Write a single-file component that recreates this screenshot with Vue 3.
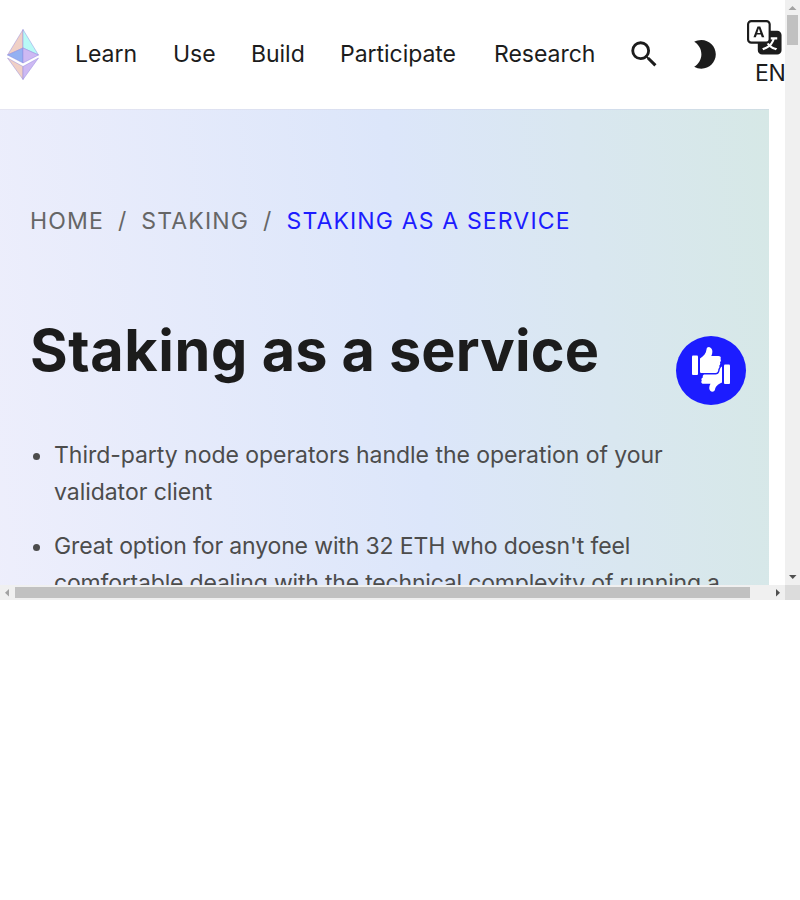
<script setup>
const links = ['Learn', 'Use', 'Build', 'Participate', 'Research']
const points = [
  ['Third-party node operators handle the operation of your', 'validator client'],
  [
    "Great option for anyone with 32 ETH who doesn't feel",
    'comfortable dealing with the technical complexity of running a',
  ],
]
</script>

<template>
  <div class="frame">
    <div class="page">
      <header class="nav">
        <svg class="logo" viewBox="0 0 32 51" width="32" height="51">
          <g stroke="#8c82dc" stroke-opacity=".55" stroke-width=".8" stroke-linejoin="round">
            <path d="M16 .5V19L.5 26z" fill="#f0d0c6" />
            <path d="M16 .5V19l15.500 7z" fill="#b8faf6" />
            <path d="M16 19v15L.5 26z" fill="#94b1f2" />
            <path d="M16 19v15l15.500-8z" fill="#cdb9f3" />
            <path d="M.5 29 16 37.500v13z" fill="#f0d0c6" />
            <path d="M31.500 29 16 37.500v13z" fill="#cdb9f3" />
          </g>
        </svg>
        <nav class="links">
          <a v-for="link in links" :key="link">{{ link }}</a>
        </nav>
        <svg class="icon search" viewBox="0 0 24 24">
          <path d="M15.500 14h-.79l-.28-.27A6.471 6.471 0 0 0 16 9.500 6.500 6.500 0 1 0 9.500 16c1.610 0 3.090-.59 4.230-1.570l.27.28v.79l5 4.990L20.490 19l-4.990-5zm-6 0C7.010 14 5 11.990 5 9.500S7.010 5 9.500 5 14 7.010 14 9.500 11.990 14 9.500 14z" />
        </svg>
        <svg class="icon moon" viewBox="0 0 24 24">
          <path d="M10 2c-1.820 0-3.530.5-5 1.350C7.990 5.080 10 8.300 10 12s-2.010 6.920-5 8.650C6.470 21.500 8.180 22 10 22c5.520 0 10-4.480 10-10S15.520 2 10 2z" />
        </svg>
        <div class="language">
          <svg class="icon" viewBox="0 0 16 16">
            <path d="M4.545 6.714 4.110 8H3l1.862-5h1.284L8 8H6.833l-.435-1.286H4.545zm1.634-.736L5.500 3.956h-.049l-.679 2.022H6.180z" />
            <path d="M0 2a2 2 0 0 1 2-2h7a2 2 0 0 1 2 2v3h3a2 2 0 0 1 2 2v7a2 2 0 0 1-2 2H7a2 2 0 0 1-2-2v-3H2a2 2 0 0 1-2-2V2zm2-1a1 1 0 0 0-1 1v7a1 1 0 0 0 1 1h7a1 1 0 0 0 1-1V2a1 1 0 0 0-1-1H2zm7.138 9.995c.193.301.402.583.63.846-.748.575-1.673 1.001-2.768 1.292.178.217.451.635.555.867 1.125-.359 2.080-.844 2.886-1.494.777.665 1.739 1.165 2.930 1.472.133-.254.414-.673.629-.89-1.125-.253-2.057-.694-2.820-1.284.681-.747 1.222-1.651 1.621-2.757H14V8h-3v1.047h.765c-.318.844-.74 1.546-1.272 2.130a6.066 6.066 0 0 1-.415-.492 1.988 1.988 0 0 1-.94.31z" />
          </svg>
          <span>EN</span>
        </div>
      </header>
      <main class="hero">
        <div class="crumbs">
          <a>HOME</a><span class="slash">/</span><a>STAKING</a><span class="slash">/</span><a class="active">STAKING AS A SERVICE</a>
        </div>
        <h1><span class="lead">Staking</span> as a service</h1>
        <ul>
          <li v-for="(lines, i) in points" :key="i">
            <span v-for="line in lines" :key="line" class="line">{{ line }}</span>
          </li>
        </ul>
      </main>
      <button class="feedback" aria-label="Feedback">
        <svg viewBox="0 0 38 45" width="38" height="45" fill="#fff">
          <rect x="0" y="8.500" width="6" height="19.500" rx="1" />
          <path d="M8 11.500C12 9 14 6.500 14.500 2.500C14.800 0 17 -.4 18.500 .7C21 2.500 20.700 6 19.300 9H26.500C28.500 9 29.300 10.500 28.500 12C29.200 13 29 14.500 28 15.200C28.500 16.500 28.200 18 27.200 18.700C27.700 20 27.200 21.500 26.300 22C26.500 24 25.500 26 23.500 26H10C8.500 26 8 25.500 8 24.500z" />
          <rect x="32" y="17.500" width="6" height="19.500" rx="1" />
          <path d="M30 19.500C28.300 20.500 27.800 22 27.500 24C27 26.500 25.500 27.500 23.500 27.500H12C10.500 28.500 10.500 29.500 11 30.200C9.500 31 9 32.500 9.800 33.500C8.700 35 9.500 36.700 11.500 36.700H18.500C17 39 16.700 42 18.500 44C20 45.500 22.500 44.700 23 42.500C23.500 39.500 25.500 37.500 30 35.500z" />
        </svg>
      </button>
    </div>
    <div class="vbar">
      <svg width="15" height="15"><path d="M3.500 10h8l-4-4z" fill="#a3a3a3" /></svg>
      <div class="vthumb"></div>
      <svg class="down" width="15" height="15"><path d="M4 5h7.500l-3.750 4z" fill="#505050" /></svg>
    </div>
    <div class="hbar">
      <svg width="15" height="15"><path d="M9 4v7.500L5 7.750z" fill="#a3a3a3" /></svg>
      <div class="hthumb"></div>
      <svg class="right" width="15" height="15"><path d="M6 4v7.500l4-3.750z" fill="#505050" /></svg>
    </div>
    <div class="corner"></div>
  </div>
</template>

<style>
body {
  background: #fff;
}
</style>

<style scoped>
.frame {
  width: 800px;
  height: 600px;
  display: grid;
  grid-template: 585px 15px / 785px 15px;
  font-family: Inter, sans-serif;
  font-size: 23.04px;
  line-height: 36.86px;
  font-weight: 400;
  color: #1c1c1c;
}
.page {
  position: relative;
  overflow: hidden;
}
.nav {
  box-sizing: border-box;
  width: 800px;
  height: 109px;
  padding-left: 7px;
  display: flex;
  align-items: center;
}
.logo {
  flex: none;
}
.links {
  display: grid;
  grid-template-columns: 98px 78px 89px 154px 105px;
  margin-left: 36px;
  letter-spacing: -0.05px;
}
.icon {
  display: block;
  flex: none;
  width: 34.56px;
  height: 34.56px;
  fill: #1c1c1c;
}
.search {
  margin-left: 28px;
}
.moon {
  margin-left: 25.5px;
}
.language {
  flex: none;
  display: flex;
  flex-direction: column;
  width: 38px;
  margin-left: 25.5px;
  padding-top: 3px;
}
.language span {
  margin-left: 8px;
  letter-spacing: -0.4px;
}
.hero {
  box-sizing: border-box;
  width: 769px;
  height: 1200px;
  padding: 93px 30px 0;
  border-top: 1px solid rgba(0, 0, 0, 0.04);
  background: linear-gradient(83.46deg, #efeffc 5%, #dce6fa 57.5%, #d6e8e6 100%);
}
.crumbs {
  display: flex;
  letter-spacing: 1.13px;
  color: #666;
}
.slash {
  margin: 0 14px;
}
.active {
  color: #1c1cff;
}
h1 {
  margin: 70px 0 0;
  font-size: 57.6px;
  line-height: 80px;
  font-weight: 700;
  letter-spacing: 0.15px;
}
.lead {
  letter-spacing: 0.6px;
}
ul {
  margin: 47px 0 0;
  padding-left: 24px;
  color: #4c4c4c;
}
li {
  margin-bottom: 17.28px;
}
.line {
  display: block;
  white-space: nowrap;
  letter-spacing: -0.055px;
}
li:last-child .line {
  letter-spacing: -0.15px;
}
li:last-child .line:last-child {
  letter-spacing: -0.205px;
}
.feedback {
  box-sizing: border-box;
  position: absolute;
  left: 676px;
  top: 336px;
  width: 70px;
  height: 69px;
  padding: 0 0 2px;
  border: 0;
  border-radius: 50%;
  background: #1c1cff;
  display: flex;
  align-items: center;
  justify-content: center;
}
.vbar {
  display: flex;
  flex-direction: column;
  background: #f0f0f0;
}
.vthumb {
  width: 11px;
  height: 30px;
  margin-left: 2px;
  background: #c1c1c1;
}
.down {
  margin-top: auto;
}
.hbar {
  display: flex;
  background: #f0f0f0;
}
.hthumb {
  width: 735px;
  height: 11px;
  margin-top: 2px;
  background: #c1c1c1;
}
.right {
  margin-left: auto;
}
.corner {
  background: #dcdcdc;
}
</style>
